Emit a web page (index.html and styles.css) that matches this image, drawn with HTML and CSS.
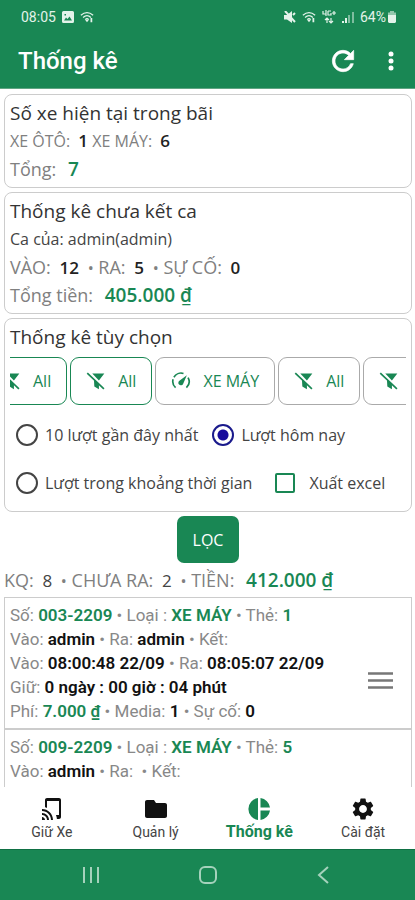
FILE: index.html
```html
<!DOCTYPE html>
<html lang="vi">
<head>
<meta charset="utf-8">
<meta name="viewport" content="width=device-width, initial-scale=1">
<title>Thống kê</title>
<link rel="stylesheet" href="styles.css">
</head>
<body>
<svg class="defs" aria-hidden="true">
  <symbol id="filter-off" viewBox="0 0 24 24">
    <path d="M7.500 3H22L15.500 11.500zM9.500 9.500l6 6V22l-5.500-3.500z"/>
    <path d="M1.500 2.500L21.500 21.500" fill="none" stroke="currentColor" stroke-width="2"/>
  </symbol>
  <symbol id="wifi" viewBox="0 0 16 14">
    <path d="M1 5q7-6 14 0M3.500 7.500q4.500-4 9 0M6 10q2-2 4 0" fill="none" stroke="currentColor" stroke-width="1.500"/>
    <path d="M8 13L6 10.500h4zM12 8h2v5h-2z"/>
  </symbol>
</svg>

<header class="top">
  <div class="status">
    <div class="status-group">
      <span>08:05</span>
      <svg class="s12" viewBox="0 0 12 12"><path fill-rule="evenodd" d="M1.500 0h9Q12 0 12 1.500v9q0 1.500-1.500 1.500h-9Q0 12 0 10.500v-9Q0 0 1.500 0zM2 9.500h8L7.500 5.500 5.500 8 4 6.500zM2.500 3v1.500H4V3z"/></svg>
      <svg class="s14"><use href="#wifi"/></svg>
    </div>
    <div class="status-group">
      <svg class="s12" viewBox="0 0 12 12"><path d="M0 4h3l5-4v12L3 8.500H0z"/><path d="M1 0l10 11M9 4l2-2" stroke="currentColor" stroke-width="2"/></svg>
      <svg class="s14"><use href="#wifi"/></svg>
      <svg class="s14" viewBox="0 0 14 14"><path d="M1 1v3h3M4 0v6M6 1h3M6 1v4h3V3M12 1v4M10 3h4M5 8v5M3 10l2-2 2 2M9 8v5M7 11l2 2 2-2" fill="none" stroke="currentColor" stroke-width="1.200"/></svg>
      <svg class="s12" viewBox="0 0 12 12"><path d="M0 10h2v2H0zM3 7h2v5H3z"/><path d="M6 4h2v8H6zM10 1h2v11h-2z" opacity=".5"/></svg>
      <span class="battery">64%<svg class="cell" viewBox="0 0 8 12"><path opacity=".6" d="M2 0h4v1.500h2V5H0V1.500h2z"/><path d="M0 4h8v7l-1 1H1l-1-1z"/></svg></span>
    </div>
  </div>
  <div class="appbar">
    <h1>Thống kê</h1>
    <div class="actions">
      <button type="button" aria-label="Tải lại"><svg class="s32" viewBox="0 0 24 24"><path stroke="currentColor" stroke-width=".5" d="M17.650 6.350C16.200 4.900 14.210 4 12 4c-4.420 0-7.990 3.580-7.990 8s3.570 8 7.990 8c3.730 0 6.840-2.550 7.730-6h-2.080c-.820 2.330-3.040 4-5.650 4-3.310 0-6-2.690-6-6s2.690-6 6-6c1.660 0 3.140.690 4.220 1.780L13 11h7V4l-2.350 2.350z"/></svg></button>
      <button type="button" aria-label="Thêm"><svg class="s24" viewBox="0 0 24 24"><circle cx="12" cy="5" r="2.500"/><circle cx="12" cy="12" r="2.500"/><circle cx="12" cy="19" r="2.500"/></svg></button>
    </div>
  </div>
</header>

<main>
  <section class="card">
    <h2>Số xe hiện tại trong bãi</h2>
    <p class="stat small">XE ÔTÔ: <b class="lead">1</b> XE MÁY: <b class="lead">6</b></p>
    <p class="stat">Tổng: <b class="total">7</b></p>
  </section>

  <section class="card">
    <h2>Thống kê chưa kết ca</h2>
    <p class="owner">Ca của: admin(admin)</p>
    <p class="stat">VÀO: <b class="lead">12</b> <i>•</i> RA: <b class="lead">5</b> <i>•</i> SỰ CỐ: <b class="lead">0</b></p>
    <p class="stat">Tổng tiền: <b class="total">405.000 ₫</b></p>
  </section>

  <section class="card">
    <h2>Thống kê tùy chọn</h2>
    <div class="chips">
      <div class="track">
        <button type="button" class="chip on"><svg class="s20"><use href="#filter-off"/></svg>All</button>
        <button type="button" class="chip on"><svg class="s20"><use href="#filter-off"/></svg>All</button>
        <button type="button" class="chip"><svg class="s20" viewBox="0 0 24 24"><path d="M5.500 20A10 10 0 0 1 2.500 10M3.500 7.500A10 10 0 0 1 15 3M20.500 8A10 10 0 0 1 18.500 20" fill="none" stroke="currentColor" stroke-width="2"/><path d="M19 5l-4.500 10.500a3 3 0 1 1-4-4z"/></svg>XE MÁY</button>
        <button type="button" class="chip"><svg class="s20"><use href="#filter-off"/></svg>All</button>
        <button type="button" class="chip" aria-label="All"><svg class="s20"><use href="#filter-off"/></svg></button>
      </div>
    </div>
    <div class="options">
      <label><input type="radio" name="range">10 lượt gần đây nhất</label>
      <label><input type="radio" name="range" checked>Lượt hôm nay</label>
    </div>
    <div class="options">
      <label><input type="radio" name="range">Lượt trong khoảng thời gian</label>
      <label class="tick"><input type="checkbox">Xuất excel</label>
    </div>
  </section>

  <button type="button" class="filter">LỌC</button>

  <p class="summary">KQ: <span class="lead dark">8</span> <i>•</i> CHƯA RA: <span class="lead dark">2</span> <i>•</i> TIỀN: <b class="total">412.000 ₫</b></p>

  <ul class="list">
    <li>
      <div>
        <p>Số: <b class="green">003-2209</b> • Loại : <b class="green">XE MÁY</b> • Thẻ: <b class="green">1</b></p>
        <p>Vào: <b>admin</b> • Ra: <b>admin</b> • Kết:</p>
        <p>Vào: <b>08:00:48 22/09</b> • Ra: <b>08:05:07 22/09</b></p>
        <p>Giữ: <b>0 ngày : 00 giờ : 04 phút</b></p>
        <p>Phí: <b class="green">7.000 ₫</b> • Media: <b>1</b> • Sự cố: <b>0</b></p>
      </div>
      <button type="button" class="menu" aria-label="Tùy chọn"><svg viewBox="0 0 24 16"><path d="M0 0h24v2.500H0zM0 6.750h24v2.500H0zM0 13.500h24V16H0z"/></svg></button>
    </li>
    <li>
      <div>
        <p>Số: <b class="green">009-2209</b> • Loại : <b class="green">XE MÁY</b> • Thẻ: <b class="green">5</b></p>
        <p>Vào: <b>admin</b> • Ra: &nbsp;• Kết:</p>
      </div>
    </li>
  </ul>
</main>

<nav class="tabs">
  <a href="#giu-xe"><svg class="s24" viewBox="0 0 24 24"><path d="M2 16v2c2.760 0 5 2.240 5 5h2c0-3.870-3.130-7-7-7zm0 4v3h3c0-1.660-1.340-3-3-3zm0-8v2c4.970 0 9 4.030 9 9h2c0-6.080-4.920-11-11-11zM19 1H7c-1.100 0-2 .900-2 2v7.370c.690.160 1.360.370 2 .640V4h12v14h-3.030c.520 1.250.840 2.590.950 4H19c1.100 0 2-.900 2-2V3c0-1.100-.900-2-2-2z"/></svg>Giữ Xe</a>
  <a href="#quan-ly"><svg class="s24" viewBox="0 0 24 24"><path d="M10 3H3c-1.100 0-2 .900-2 2v14c0 1.100.900 2 2 2h18c1.100 0 2-.900 2-2V8c0-1.100-.900-2-2-2h-9z"/></svg>Quản lý</a>
  <a href="#thong-ke" class="current" aria-current="page"><svg class="s24" viewBox="0 0 24 24"><path d="M11 1v22A11.100 11.100 0 0 1 11 1zM13.500 1A11 11 0 0 1 23 10.500h-9.500zM13.500 13.500H23A11 11 0 0 1 13.500 23z"/></svg>Thống kê</a>
  <a href="#cai-dat"><svg class="s24" viewBox="1 1 22 22"><path fill-rule="evenodd" d="M19.140 12.940c.040-.300.060-.610.060-.940 0-.320-.020-.640-.070-.940l2.030-1.580c.180-.140.230-.410.120-.610l-1.920-3.320c-.120-.220-.370-.290-.590-.220l-2.390.960c-.500-.380-1.030-.700-1.620-.940L14.400 2.810c-.040-.240-.240-.410-.480-.410h-3.840c-.240 0-.430.170-.470.410L9.250 5.350c-.590.240-1.130.570-1.620.940l-2.390-.960c-.220-.080-.470 0-.590.220L2.740 8.870c-.120.210-.080.470.120.610l2.030 1.580c-.050.300-.090.630-.090.940s.020.640.070.940l-2.030 1.580c-.180.140-.230.410-.120.610l1.920 3.320c.120.220.370.290.590.220l2.390-.960c.500.380 1.030.700 1.620.940l.360 2.540c.050.240.240.410.480.410h3.840c.240 0 .440-.170.470-.410l.360-2.540c.590-.240 1.130-.560 1.620-.940l2.390.960c.220.080.470 0 .590-.220l1.920-3.320c.120-.220.070-.470-.120-.610l-2.010-1.580zM12 15.600c-1.980 0-3.600-1.620-3.600-3.600s1.620-3.600 3.600-3.600 3.600 1.620 3.600 3.600-1.620 3.600-3.600 3.600z"/></svg>Cài đặt</a>
</nav>

<footer class="system">
  <button type="button" aria-label="Gần đây"><svg class="s20" viewBox="0 0 20 20"><path d="M3 2v16M10 2v16M17 2v16"/></svg></button>
  <button type="button" aria-label="Trang chủ"><svg class="s20" viewBox="0 0 20 20"><rect x="2" y="2" width="16" height="16" rx="5"/></svg></button>
  <button type="button" aria-label="Quay lại"><svg class="s20" viewBox="0 0 20 20"><path d="M14 2L5 10l9 8"/></svg></button>
</footer>
</body>
</html>
```
FILE: styles.css
```css
* { box-sizing: border-box; }

body {
  margin: 0;
  height: 100vh;
  display: flex;
  flex-direction: column;
  background: #fff;
  color: #333;
  font-family: "Open Sans", "Noto Sans", sans-serif;
  font-size: 16px;
}

h1, h2, p, ul { margin: 0; padding: 0; font-weight: 400; }
button { font: inherit; color: inherit; background: none; border: 0; padding: 0; }
svg { display: block; fill: currentColor; flex: none; }

.defs { position: absolute; width: 0; height: 0; }
.s12 { width: 12px; height: 12px; }
.s14 { width: 14px; height: 14px; }
.s20 { width: 20px; height: 20px; }
.s24 { width: 24px; height: 24px; }
.s32 { width: 32px; height: 32px; }

.top {
  flex: none;
  background: #198754;
  color: #fff;
  font-family: Roboto, sans-serif;
  border-bottom: 1px solid #5fa583;
}
.status {
  display: flex;
  justify-content: space-between;
  height: 33px;
  padding: 0 19px 0 21px;
  font-size: 14px;
  color: #e3f3ea;
}
.status-group { display: flex; align-items: center; gap: 6px; }
.battery { display: flex; align-items: center; gap: 2px; }
.cell { width: 8px; height: 12px; }
.appbar {
  display: flex;
  align-items: center;
  justify-content: space-between;
  height: 55px;
  padding: 0 12px 0 18px;
}
.appbar h1 { font-size: 24px; font-weight: 500; }
.actions { display: flex; align-items: center; gap: 20px; }

main {
  flex: 1;
  min-height: 0;
  overflow: hidden;
  display: flex;
  flex-direction: column;
  padding: 5px 3px 0 4px;
}
.card {
  flex: none;
  border: 1px solid #ccc;
  border-radius: 8px;
  padding: 4px 5px;
  margin-bottom: 4px;
}
.card h2 { font-size: 19px; line-height: 28px; }
.stat, .owner { line-height: 28px; }
.stat, .summary { font-size: 18px; color: #808080; }
.stat.small { font-size: 16px; }
.owner { color: #444; }
.stat b { font-weight: 600; color: #222; line-height: 1; }
.stat i, .summary i { margin-left: 4px; font-style: normal; font-size: 16px; line-height: 1; }
.lead { margin-left: 4px; font-size: 17px; line-height: 1; }
.dark { color: #444; }
.stat .total, .summary .total {
  margin-left: 7px;
  color: #198754;
  font-size: 19px;
  font-weight: 600;
  line-height: 1;
}

.chips { overflow: hidden; margin-top: 6px; }
.track { display: flex; gap: 3px; margin-left: -25px; }
.chip {
  flex: none;
  display: flex;
  align-items: center;
  gap: 12px;
  min-width: 82px;
  height: 48px;
  padding: 0 15px;
  border: 1px solid #aaa;
  border-radius: 9px;
  color: #198754;
}
.chip.on { border-color: #198754; }

.options { display: flex; align-items: center; height: 48px; padding-left: 6px; gap: 14px; }
.chips + .options { margin-top: 6px; }
.options label { display: flex; align-items: center; gap: 7px; color: #444; }
.options input {
  appearance: none;
  flex: none;
  width: 22px;
  height: 22px;
  margin: 0;
  border: 2px solid #444;
  border-radius: 50%;
}
.options input:checked {
  border-color: #1a1a8c;
  background: radial-gradient(circle, #180c9c 0 5px, transparent 6px);
}
.options .tick { gap: 14px; margin-left: 9px; }
.options .tick input { width: 20px; height: 20px; border-color: #198754; border-radius: 2px; }

.filter {
  flex: none;
  align-self: center;
  height: 47px;
  padding: 0 16px;
  border-radius: 7px;
  background: #198754;
  color: #fff;
}
.summary { flex: none; line-height: 34px; }

.list {
  flex: 1;
  display: flex;
  flex-direction: column;
  list-style: none;
  font-family: Roboto, sans-serif;
  font-size: 17px;
  color: #888;
}
.list li {
  flex: none;
  display: flex;
  align-items: center;
  justify-content: space-between;
  border: 1px solid #ccc;
  padding: 5px 18px 5px 5px;
}
.list li:last-child { flex: 1; align-items: flex-start; border-bottom: 0; }
.list p { line-height: 24px; }
.list b { font-weight: 600; color: #111; }
.list .green { color: #198754; }
.menu { margin-top: 34px; color: #777; }
.menu svg { width: 25px; height: 17px; }

.tabs {
  flex: none;
  display: grid;
  grid-template-columns: repeat(4, 1fr);
  height: 62px;
  background: #fff;
  font-family: Roboto, sans-serif;
  font-size: 14px;
}
.tabs a {
  display: flex;
  flex-direction: column;
  align-items: center;
  padding-top: 10px;
  line-height: 22px;
  color: #444;
  text-decoration: none;
}
.tabs svg { color: #111; }
.tabs .current, .tabs .current svg { color: #198754; }
.tabs .current { font-size: 16px; font-weight: 700; }

.system {
  flex: none;
  display: flex;
  justify-content: space-between;
  align-items: center;
  height: 51px;
  padding: 0 81px;
  background: #198754;
  border-top: 1px solid #0f7044;
  color: #a5d2bc;
}
.system svg { fill: none; stroke: currentColor; stroke-width: 2; }
```
